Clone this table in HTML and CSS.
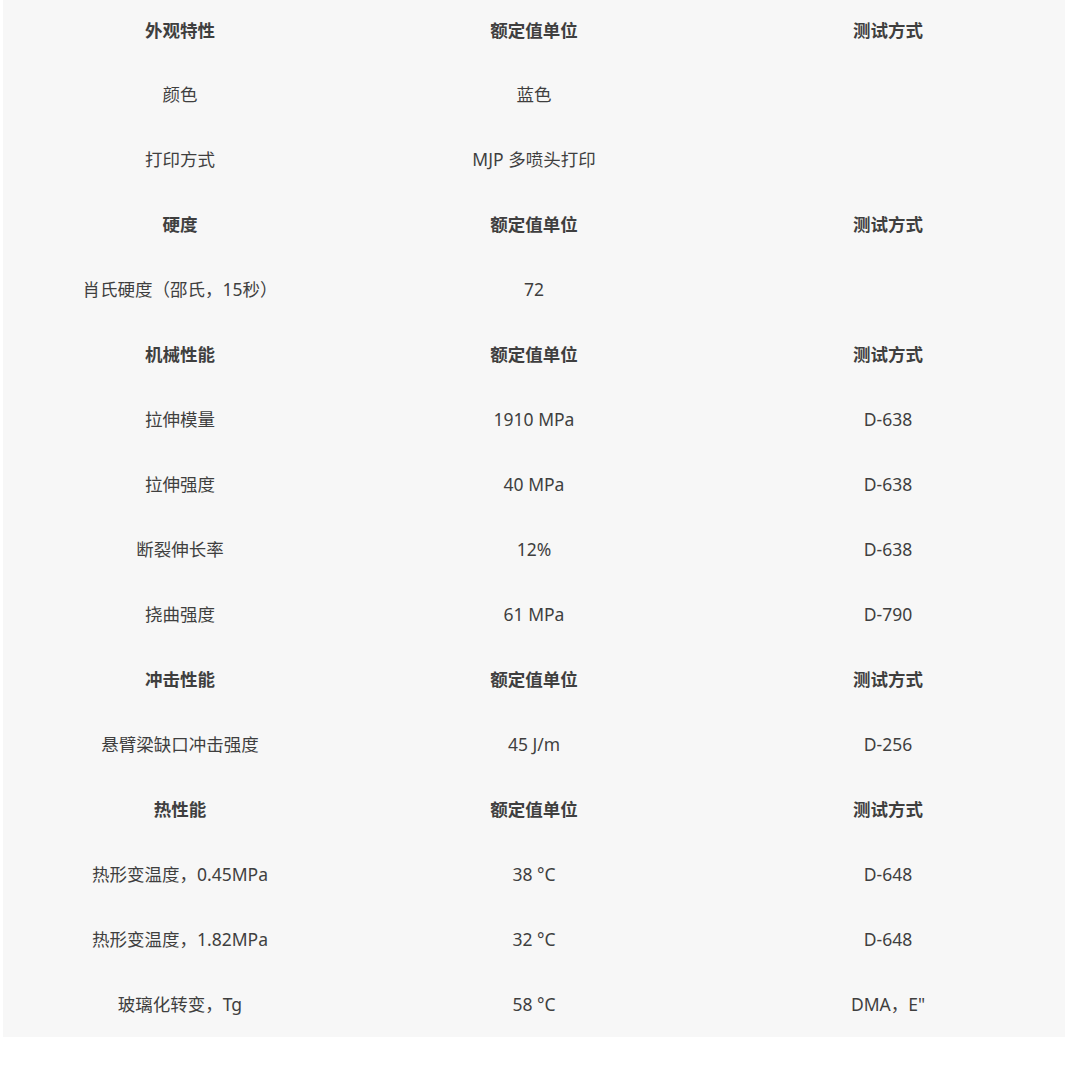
FILE: index.html
```html
<!DOCTYPE html>
<html lang="zh-CN">
<head>
<meta charset="utf-8">
<title>材料性能</title>
<link rel="stylesheet" href="styles.css">
</head>
<body>
<table class="spec">
  <tbody>
    <tr class="head first"><td>外观特性</td><td>额定值单位</td><td>测试方式</td></tr>
    <tr><td>颜色</td><td>蓝色</td><td></td></tr>
    <tr><td>打印方式</td><td>MJP 多喷头打印</td><td></td></tr>
    <tr class="head"><td>硬度</td><td>额定值单位</td><td>测试方式</td></tr>
    <tr><td>肖氏硬度（邵氏，15秒）</td><td>72</td><td></td></tr>
    <tr class="head"><td>机械性能</td><td>额定值单位</td><td>测试方式</td></tr>
    <tr><td>拉伸模量</td><td>1910 MPa</td><td>D-638</td></tr>
    <tr><td>拉伸强度</td><td>40 MPa</td><td>D-638</td></tr>
    <tr><td>断裂伸长率</td><td>12%</td><td>D-638</td></tr>
    <tr><td>挠曲强度</td><td>61 MPa</td><td>D-790</td></tr>
    <tr class="head"><td>冲击性能</td><td>额定值单位</td><td>测试方式</td></tr>
    <tr><td>悬臂梁缺口冲击强度</td><td>45 J/m</td><td>D-256</td></tr>
    <tr class="head"><td>热性能</td><td>额定值单位</td><td>测试方式</td></tr>
    <tr><td>热形变温度，0.45MPa</td><td>38 °C</td><td>D-648</td></tr>
    <tr><td>热形变温度，1.82MPa</td><td>32 °C</td><td>D-648</td></tr>
    <tr><td>玻璃化转变，Tg</td><td>58 °C</td><td>DMA，E"</td></tr>
  </tbody>
</table>
</body>
</html>
```
FILE: styles.css
```css
html, body {
  margin: 0;
  padding: 0;
  background: #ffffff;
}

.spec {
  margin: 0 3px;
  width: 1062px;
  border-collapse: collapse;
  table-layout: fixed;
  background: #f7f7f7;
  font-family: "Noto Sans", "Noto Sans CJK SC", sans-serif;
  font-size: 17.5px;
  color: #3f3f3f;
}

.spec td {
  width: 354px;
  height: 63px;
  padding: 0 0 2px 0;
  text-align: center;
  vertical-align: middle;
}

.spec tr.first td {
  height: 58px;
  padding-bottom: 4px;
}

.spec tr.head td {
  font-weight: bold;
}
```
